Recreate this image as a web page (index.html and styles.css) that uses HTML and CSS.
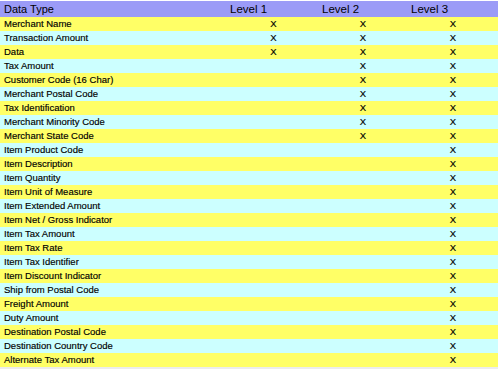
FILE: index.html
```html
<!DOCTYPE html>
<html>
<head>
<meta charset="utf-8">
<link rel="stylesheet" href="styles.css">
</head>
<body>
<div class="table">
  <div class="row head">
    <div class="name">Data Type</div>
    <div class="lv lv1">Level 1</div>
    <div class="lv lv2">Level 2</div>
    <div class="lv lv3">Level 3</div>
  </div>
  <div class="row y"><div class="name">Merchant Name</div><div class="x">X</div><div class="x">X</div><div class="x">X</div></div>
  <div class="row c"><div class="name">Transaction Amount</div><div class="x">X</div><div class="x">X</div><div class="x">X</div></div>
  <div class="row y"><div class="name">Data</div><div class="x">X</div><div class="x">X</div><div class="x">X</div></div>
  <div class="row c"><div class="name">Tax Amount</div><div class="x"></div><div class="x">X</div><div class="x">X</div></div>
  <div class="row y"><div class="name">Customer Code (16 Char)</div><div class="x"></div><div class="x">X</div><div class="x">X</div></div>
  <div class="row c"><div class="name">Merchant Postal Code</div><div class="x"></div><div class="x">X</div><div class="x">X</div></div>
  <div class="row y"><div class="name">Tax Identification</div><div class="x"></div><div class="x">X</div><div class="x">X</div></div>
  <div class="row c"><div class="name">Merchant Minority Code</div><div class="x"></div><div class="x">X</div><div class="x">X</div></div>
  <div class="row y"><div class="name">Merchant State Code</div><div class="x"></div><div class="x">X</div><div class="x">X</div></div>
  <div class="row c"><div class="name">Item Product Code</div><div class="x"></div><div class="x"></div><div class="x">X</div></div>
  <div class="row y"><div class="name">Item Description</div><div class="x"></div><div class="x"></div><div class="x">X</div></div>
  <div class="row c"><div class="name">Item Quantity</div><div class="x"></div><div class="x"></div><div class="x">X</div></div>
  <div class="row y"><div class="name">Item Unit of Measure</div><div class="x"></div><div class="x"></div><div class="x">X</div></div>
  <div class="row c"><div class="name">Item Extended Amount</div><div class="x"></div><div class="x"></div><div class="x">X</div></div>
  <div class="row y"><div class="name">Item Net / Gross Indicator</div><div class="x"></div><div class="x"></div><div class="x">X</div></div>
  <div class="row c"><div class="name">Item Tax Amount</div><div class="x"></div><div class="x"></div><div class="x">X</div></div>
  <div class="row y"><div class="name">Item Tax Rate</div><div class="x"></div><div class="x"></div><div class="x">X</div></div>
  <div class="row c"><div class="name">Item Tax Identifier</div><div class="x"></div><div class="x"></div><div class="x">X</div></div>
  <div class="row y"><div class="name">Item Discount Indicator</div><div class="x"></div><div class="x"></div><div class="x">X</div></div>
  <div class="row c"><div class="name">Ship from Postal Code</div><div class="x"></div><div class="x"></div><div class="x">X</div></div>
  <div class="row y"><div class="name">Freight Amount</div><div class="x"></div><div class="x"></div><div class="x">X</div></div>
  <div class="row c"><div class="name">Duty Amount</div><div class="x"></div><div class="x"></div><div class="x">X</div></div>
  <div class="row y"><div class="name">Destination Postal Code</div><div class="x"></div><div class="x"></div><div class="x">X</div></div>
  <div class="row c"><div class="name">Destination Country Code</div><div class="x"></div><div class="x"></div><div class="x">X</div></div>
  <div class="row y"><div class="name">Alternate Tax Amount</div><div class="x"></div><div class="x"></div><div class="x">X</div></div>
</div>
</body>
</html>
```
FILE: styles.css
```css
html, body {
  margin: 0;
  padding: 0;
  background: #ffffff;
}
body {
  font-family: "Liberation Sans", Arial, sans-serif;
  color: #000;
}
.table {
  width: 498px;
  padding-top: 1px;
  border-bottom: 2px solid #ececec;
}
.row {
  display: grid;
  grid-template-columns: 229px 89px 90px 90px;
  height: 14px;
  align-items: center;
  font-size: 9.5px;
  line-height: 14px;
  -webkit-text-stroke: 0.15px #000;
}
.row.head {
  height: 16px;
  line-height: 16px;
  background: #9b9bf7;
  font-size: 11.5px;
  -webkit-text-stroke: 0;
}
.row.y { background: #ffff66; }
.row.c { background: #ccffff; }
.name {
  padding-left: 4px;
  white-space: nowrap;
}
.head .name { font-size: 11px; }
.lv1 { padding-left: 1px; }
.lv2 { padding-left: 4px; }
.lv3 { padding-left: 3px; }
.x {
  text-align: center;
}
```
